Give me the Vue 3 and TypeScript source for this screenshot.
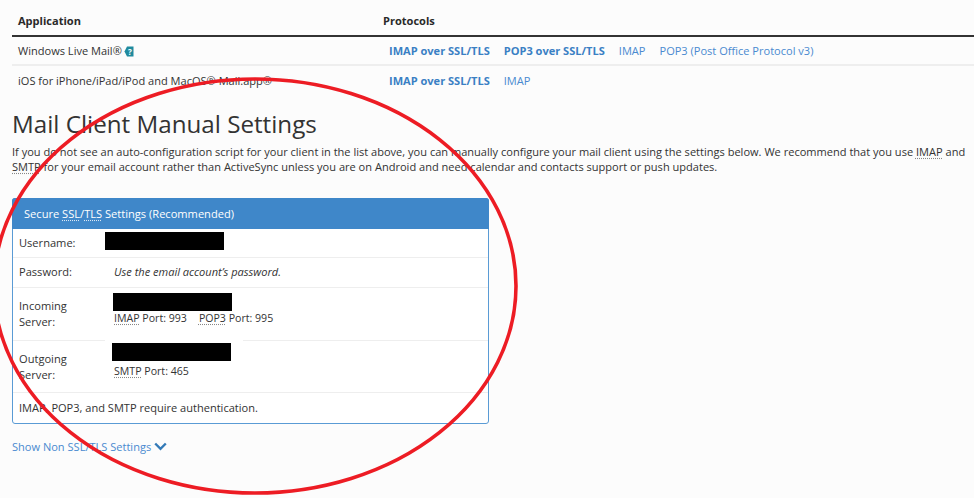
<script setup lang="ts">
const rows = [
  { app: 'Windows Live Mail®', help: true, bold: ['IMAP over SSL/TLS', 'POP3 over SSL/TLS'], plain: ['IMAP', 'POP3 (Post Office Protocol v3)'] },
  { app: 'iOS for iPhone/iPad/iPod and MacOS® Mail.app®', help: false, bold: ['IMAP over SSL/TLS'], plain: ['IMAP'] },
]
</script>

<template>
  <div class="page">
    <div class="table">
      <div class="row head">
        <div class="app">Application</div>
        <div class="proto">Protocols</div>
      </div>
      <div v-for="r in rows" :key="r.app" class="row body">
        <div class="app">
          {{ r.app }}
          <svg v-if="r.help" class="help" width="10" height="11" viewBox="0 0 10 11">
            <path d="M3 0.5H9.5V10.5H3L0.5 5.5Z" fill="#1f8a9e" />
            <text x="5.8" y="8.5" font-size="8" font-weight="700" text-anchor="middle" fill="#fff" font-family="'Open Sans', sans-serif">?</text>
          </svg>
        </div>
        <div class="links">
          <a v-for="b in r.bold" :key="b" class="bold">{{ b }}</a>
          <a v-for="p in r.plain" :key="p">{{ p }}</a>
        </div>
      </div>
    </div>

    <h1>Mail Client Manual Settings</h1>
    <p class="intro">
      If you do not see an auto-configuration script for your client in the list above, you can manually configure your mail client using the settings below. We recommend that you use <abbr>IMAP</abbr> and <abbr>SMTP</abbr> for your email account rather than ActiveSync unless you are on Android and need calendar and contacts support or push updates.
    </p>

    <section class="panel">
      <header>Secure <abbr>SSL</abbr>/<abbr>TLS</abbr> Settings (Recommended)</header>
      <div class="line user">
        <div class="label">Username:</div>
        <div class="value"><span class="redact r-user"></span></div>
      </div>
      <div class="line pass">
        <div class="label">Password:</div>
        <div class="value"><em>Use the email account’s password.</em></div>
      </div>
      <div class="line server in">
        <div class="label">Incoming Server:</div>
        <div class="value">
          <span class="redact r-in"></span>
          <div class="ports"><span><abbr>IMAP</abbr> Port: 993</span><span><abbr>POP3</abbr> Port: 995</span></div>
        </div>
      </div>
      <div class="line server out">
        <div class="label">Outgoing Server:</div>
        <div class="value">
          <span class="redact r-out"></span>
          <div class="ports"><span><abbr>SMTP</abbr> Port: 465</span></div>
        </div>
      </div>
      <div class="line note">IMAP, POP3, and SMTP require authentication.</div>
    </section>

    <a class="toggle">
      Show Non SSL/TLS Settings
      <svg width="13" height="9" viewBox="0 0 13 9"><path d="M1.2 1.5L6.5 6.8L11.8 1.5" fill="none" stroke="#337ab7" stroke-width="2.4" /></svg>
    </a>

    <svg class="ring" width="974" height="498" viewBox="0 0 974 498">
      <ellipse cx="255" cy="286" rx="261" ry="207" fill="none" stroke="#ed1c24" stroke-width="3.6" />
    </svg>
  </div>
</template>

<style>
html, body { margin: 0; background: #fcfcfc; }
</style>

<style scoped>
.page {
  position: relative;
  width: 974px;
  height: 498px;
  overflow: hidden;
  padding: 0 0 0 12px;
  box-sizing: border-box;
  background: #fcfcfc;
  color: #333;
  font-family: "Open Sans", sans-serif;
  font-size: 11.05px;
}
.table { width: 962px; }
.row { display: flex; }
.app { width: 365px; padding-left: 6px; flex: none; box-sizing: border-box; }
.head { height: 37px; align-items: flex-end; padding-bottom: 6px; box-sizing: border-box; border-bottom: 2px solid #333; font-weight: 700; line-height: 16px; color: #2a2a2a; }
.head .proto { margin-left: 6px; }
.body { height: 29px; align-items: center; line-height: 16px; border-bottom: 2px solid #eee; box-sizing: border-box; }
.body:last-child { border-bottom: none; }
.help { vertical-align: -2px; margin-left: -1px; }
.links { display: flex; gap: 14px; margin-left: 12px; color: #4a8ad0; }
.links .bold { font-weight: 700; color: #3a80c4; }
h1 {
  margin: 13px 0 0;
  font-size: 24.2px;
  font-weight: 400;
  line-height: 32px;
  color: #333;
}
.intro { margin: 4px 0 0; width: 962px; line-height: 15px; }
abbr { text-decoration: underline dotted #888; text-underline-offset: 2px; }
header abbr { text-decoration-color: #dbe8f5; }
.panel {
  position: relative;
  margin-top: 24px;
  width: 477px;
  height: 226px;
  box-sizing: border-box;
  border: 1px solid #5a9bd5;
  border-radius: 3px;
  background: #fff;
}
header {
  height: 31px;
  margin: -1px -1px 0;
  line-height: 31px;
  padding-left: 12px;
  background: #3f87c9;
  color: #fff;
  font-size: 11.1px;
  border-radius: 3px 3px 0 0;
}
.line { display: flex; padding-left: 6px; border-bottom: 1px solid #eee; box-sizing: border-box; line-height: 16px; }
.line:last-child { border-bottom: none; }
.label { width: 95px; flex: none; font-size: 11.1px; }
.user { height: 29px; align-items: center; }
.pass { height: 30px; align-items: center; padding-bottom: 2px; }
.in { height: 53px; }
.out { height: 52px; }
.note { height: 30px; align-items: center; }
.redact { display: block; height: 18px; width: 119px; background: #000; }
.user .value { margin: -5px 0 0 -9px; }
.r-in { margin-top: 5px; margin-left: -1px; }
.r-out { position: relative; margin-top: 2px; margin-left: -2px; }
.r-out::before {
  content: "";
  position: absolute;
  left: -7px;
  right: -12px;
  top: -4px;
  height: 3px;
  background: #fff;
}
.ports { display: flex; gap: 12px; line-height: 16px; font-size: 10.6px; }
.in .ports { margin-top: -1px; }
.out .ports { margin-top: 2px; }
.server .label { padding-top: 10px; width: 95px; padding-right: 40px; box-sizing: border-box; }
.toggle { display: inline-block; margin-top: 15px; color: #4a8ad0; line-height: 16px; }
.ring { position: absolute; left: 0; top: 0; pointer-events: none; }
</style>
